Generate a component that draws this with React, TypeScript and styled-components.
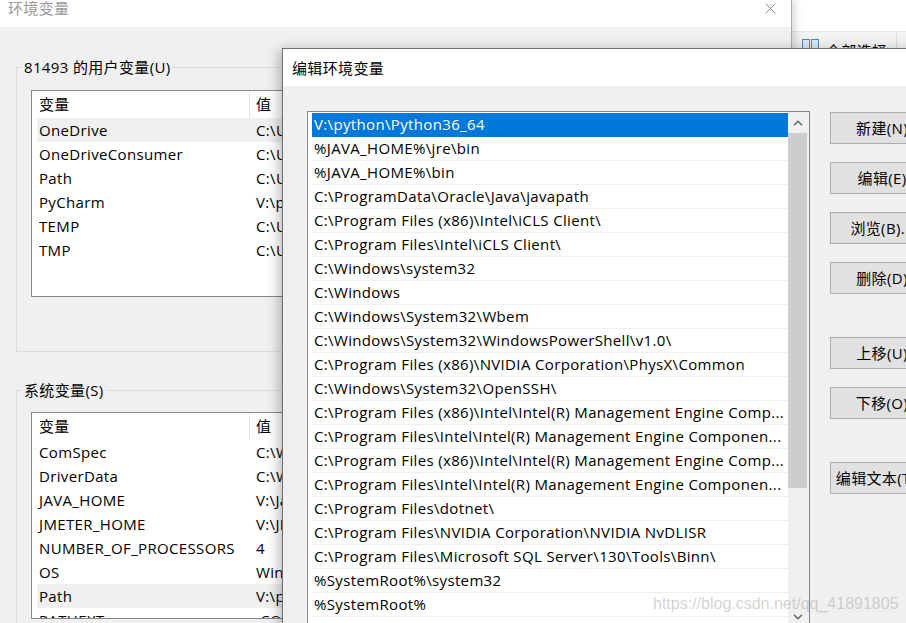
import React from "react";
import styled, { createGlobalStyle } from "styled-components";

const GlobalStyle = createGlobalStyle`
  html, body { margin: 0; padding: 0; background: #fff; }
  body {
    font-family: "Open Sans", "Noto Sans CJK SC", sans-serif;
    font-size: 15px;
    letter-spacing: 0.35px;
    color: #000;
  }
  * { box-sizing: border-box; }
`;

const Desktop = styled.div`
  position: relative;
  width: 906px;
  height: 623px;
  overflow: hidden;
  background: #fff;
`;

/* ---------- window on the right (behind) ---------- */
const RightWindow = styled.div`
  position: absolute;
  left: 792px;
  top: 0;
  width: 220px;
  height: 120px;
  display: flex;
  flex-direction: column;
  background: #fff;
`;

const RightTop = styled.div`
  height: 32px;
  border-bottom: 1px solid #e6e6e6;
  display: flex;
  justify-content: flex-end;
  padding: 11px 0 0 0;
`;

const RightToolbar = styled.div`
  flex: 1;
  background: #f3f3f3;
  display: flex;
  align-items: flex-start;
  padding: 7px 0 0 10px;
`;

const ToolLabel = styled.span`
  margin-left: 7px;
  margin-top: 2px;
  line-height: 20px;
  white-space: nowrap;
`;

const ToolDivider = styled.div`
  width: 1px;
  height: 30px;
  margin-left: 9px;
  margin-top: -6px;
  background: #dadada;
`;

/* ---------- environment variables window (behind) ---------- */
const BackWindow = styled.div`
  position: absolute;
  left: 0;
  top: 0;
  width: 792px;
  height: 700px;
  display: flex;
  flex-direction: column;
  background: #f0f0f0;
  border-right: 1px solid #a8a8a8;
  box-shadow: 3px 0 8px rgba(0, 0, 0, 0.16);
`;

const BackTitleBar = styled.div`
  height: 27px;
  background: #fff;
  display: flex;
  justify-content: space-between;
  align-items: flex-start;
  padding: 0 15px 0 8px;
`;

const InactiveTitle = styled.span`
  color: #9a9a9a;
  line-height: 16px;
`;

const CloseGlyph = styled.svg`
  margin-top: 3px;
`;

const BackBody = styled.div`
  flex: 1;
  display: flex;
  flex-direction: column;
  padding: 0 16px;
`;

const GroupBox = styled.div<{ $top: number; $padTop: number; $padBottom: number }>`
  position: relative;
  border: 1px solid #dcdcdc;
  margin-top: ${(p) => p.$top}px;
  padding: ${(p) => p.$padTop}px 14px ${(p) => p.$padBottom}px 14px;
`;

const GroupTitle = styled.span`
  position: absolute;
  top: -11px;
  left: 5px;
  padding: 0 2px;
  background: #f0f0f0;
  line-height: 20px;
  white-space: nowrap;
`;

const VarList = styled.div`
  height: 207px;
  border: 1px solid #828790;
  background: #fff;
  overflow: hidden;
  padding-left: 5px;
`;

const ListHeader = styled.div`
  display: grid;
  grid-template-columns: 213px 1fr;
  height: 27px;
`;

const HeaderCell = styled.div<{ $sep?: boolean }>`
  line-height: 27px;
  padding-left: ${(p) => (p.$sep ? 2 : 6)}px;
  border-right: ${(p) => (p.$sep ? "1px solid #e5e5e5" : "none")};
  margin-bottom: 1px;
`;

const VarRow = styled.div<{ $hover?: boolean }>`
  display: grid;
  grid-template-columns: 213px 1fr;
  height: 24px;
  line-height: 24px;
  background: ${(p) => (p.$hover ? "#f0f0f0" : "transparent")};
  white-space: nowrap;
`;

const VarCell = styled.span<{ $value?: boolean }>`
  padding-left: ${(p) => (p.$value ? 6 : 2)}px;
  overflow: hidden;
`;

/* ---------- edit dialog (front) ---------- */
const Dialog = styled.div`
  position: absolute;
  left: 282px;
  top: 48px;
  width: 720px;
  height: 640px;
  display: flex;
  flex-direction: column;
  background: #f0f0f0;
  border: 1px solid #6f6f6f;
  box-shadow: -3px 2px 12px rgba(0, 0, 0, 0.28);
`;

const DialogTitleBar = styled.div`
  height: 37px;
  background: #fff;
  display: flex;
  align-items: center;
  padding-left: 9px;
`;

const DialogBody = styled.div`
  display: flex;
  align-items: flex-start;
  gap: 20px;
  padding: 25px 0 0 24px;
`;

const PathList = styled.div`
  width: 503px;
  height: 517px;
  border: 1px solid #828790;
  background: #fff;
  display: flex;
`;

const PathItems = styled.div`
  flex: 1;
  min-width: 0;
  padding: 1px 0 0 4px;
  overflow: hidden;
`;

const PathRow = styled.div<{ $selected?: boolean }>`
  height: 24px;
  line-height: 23px;
  padding: 0 2px 0 2px;
  white-space: nowrap;
  overflow: hidden;
  border-bottom: 1px solid ${(p) => (p.$selected ? "#0078d7" : "#efefef")};
  background: ${(p) => (p.$selected ? "#0078d7" : "transparent")};
  color: ${(p) => (p.$selected ? "#fff" : "#000")};
`;

const ScrollBar = styled.div`
  width: 21px;
  background: #f0f0f0;
  display: flex;
  flex-direction: column;
`;

const ScrollArrow = styled.div`
  height: 21px;
  display: flex;
  align-items: center;
  justify-content: center;
  padding-right: 2px;
`;

const ScrollThumb = styled.div`
  height: 355px;
  margin-right: 2px;
  background: #cdcdcd;
`;

const ScrollTrack = styled.div`
  flex: 1;
`;

const ButtonColumn = styled.div`
  display: flex;
  flex-direction: column;
  gap: 18px;
  padding-top: 1px;
`;

const ActionButton = styled.button<{ $extra?: number }>`
  width: 100px;
  height: 32px;
  margin-top: ${(p) => p.$extra ?? 0}px;
  border: 1px solid #adadad;
  background: #e1e1e1;
  font: inherit;
  letter-spacing: inherit;
  color: #000;
  padding: 0 0 2px 4px;
  display: flex;
  align-items: center;
  justify-content: center;
  white-space: nowrap;
  overflow: hidden;
`;

const Watermark = styled.div`
  position: absolute;
  left: 653px;
  top: 594px;
  font-family: "Liberation Sans", Arial, sans-serif;
  font-size: 16px;
  letter-spacing: 0;
  line-height: 20px;
  color: rgba(150, 150, 150, 0.42);
  white-space: nowrap;
  pointer-events: none;
`;

/* ---------- data ---------- */
const userVars: [string, string, boolean?][] = [
  ["OneDrive", "C:\\Users\\81493\\OneDrive", true],
  ["OneDriveConsumer", "C:\\Users\\81493\\OneDrive"],
  ["Path", "C:\\Users\\81493\\AppData\\Local\\Microsoft\\WindowsApps;"],
  ["PyCharm", "V:\\pycharm\\bin;"],
  ["TEMP", "C:\\Users\\81493\\AppData\\Local\\Temp"],
  ["TMP", "C:\\Users\\81493\\AppData\\Local\\Temp"],
];

const sysVars: [string, string, boolean?][] = [
  ["ComSpec", "C:\\Windows\\system32\\cmd.exe"],
  ["DriverData", "C:\\Windows\\System32\\Drivers\\DriverData"],
  ["JAVA_HOME", "V:\\Java\\jdk1.8.0"],
  ["JMETER_HOME", "V:\\JMeter\\apache-jmeter"],
  ["NUMBER_OF_PROCESSORS", "4"],
  ["OS", "Windows_NT"],
  ["Path", "V:\\python\\Python36_64;%JAVA_HOME%\\jre\\bin;", true],
  ["PATHEXT", ".COM;.EXE;.BAT;.CMD;.VBS"],
];

const paths = [
  "V:\\python\\Python36_64",
  "%JAVA_HOME%\\jre\\bin",
  "%JAVA_HOME%\\bin",
  "C:\\ProgramData\\Oracle\\Java\\javapath",
  "C:\\Program Files (x86)\\Intel\\iCLS Client\\",
  "C:\\Program Files\\Intel\\iCLS Client\\",
  "C:\\Windows\\system32",
  "C:\\Windows",
  "C:\\Windows\\System32\\Wbem",
  "C:\\Windows\\System32\\WindowsPowerShell\\v1.0\\",
  "C:\\Program Files (x86)\\NVIDIA Corporation\\PhysX\\Common",
  "C:\\Windows\\System32\\OpenSSH\\",
  "C:\\Program Files (x86)\\Intel\\Intel(R) Management Engine Comp...",
  "C:\\Program Files\\Intel\\Intel(R) Management Engine Componen...",
  "C:\\Program Files (x86)\\Intel\\Intel(R) Management Engine Comp...",
  "C:\\Program Files\\Intel\\Intel(R) Management Engine Componen...",
  "C:\\Program Files\\dotnet\\",
  "C:\\Program Files\\NVIDIA Corporation\\NVIDIA NvDLISR",
  "C:\\Program Files\\Microsoft SQL Server\\130\\Tools\\Binn\\",
  "%SystemRoot%\\system32",
  "%SystemRoot%",
  "",
];

const buttons: [string, number][] = [
  ["新建(N)", 0],
  ["编辑(E)", 0],
  ["浏览(B)...", 0],
  ["删除(D)", 0],
  ["上移(U)", 25],
  ["下移(O)", 0],
  ["编辑文本(T)...", 25],
];

const Chevron = ({ up }: { up?: boolean }) => (
  <svg width="10" height="6" viewBox="0 0 10 6">
    <polyline
      points={up ? "1,5.2 5,1.2 9,5.2" : "1,0.8 5,4.8 9,0.8"}
      fill="none"
      stroke="#606060"
      strokeWidth="1.4"
    />
  </svg>
);

const VarTable = ({ rows }: { rows: [string, string, boolean?][] }) => (
  <VarList>
    <ListHeader>
      <HeaderCell $sep>变量</HeaderCell>
      <HeaderCell>值</HeaderCell>
    </ListHeader>
    {rows.map(([name, value, hover]) => (
      <VarRow key={name} $hover={hover}>
        <VarCell>{name}</VarCell>
        <VarCell $value>{value}</VarCell>
      </VarRow>
    ))}
  </VarList>
);

export default function App() {
  return (
    <>
      <GlobalStyle />
      <Desktop>
        <RightWindow>
          <RightTop>
            <svg width="10" height="8" viewBox="0 0 10 8" style={{ marginRight: 2 }}>
              <line x1="1" y1="7" x2="9" y2="1" stroke="#a0a0a0" strokeWidth="1" />
            </svg>
          </RightTop>
          <RightToolbar>
            <svg width="17" height="14" viewBox="0 0 17 14">
              <rect x="0.5" y="0.5" width="7" height="13" fill="#d6e8f8" stroke="#3a8ad6" />
              <rect x="9.5" y="0.5" width="7" height="13" fill="#d6e8f8" stroke="#3a8ad6" />
            </svg>
            <ToolLabel>全部选择</ToolLabel>
            <ToolDivider />
          </RightToolbar>
        </RightWindow>

        <BackWindow>
          <BackTitleBar>
            <InactiveTitle>环境变量</InactiveTitle>
            <CloseGlyph width="11" height="11" viewBox="0 0 11 11">
              <line x1="0.5" y1="0.5" x2="10.5" y2="10.5" stroke="#8a8a8a" strokeWidth="1" />
              <line x1="10.5" y1="0.5" x2="0.5" y2="10.5" stroke="#8a8a8a" strokeWidth="1" />
            </CloseGlyph>
          </BackTitleBar>
          <BackBody>
            <GroupBox $top={40} $padTop={22} $padBottom={54}>
              <GroupTitle>81493 的用户变量(U)</GroupTitle>
              <VarTable rows={userVars} />
            </GroupBox>
            <GroupBox $top={38} $padTop={21} $padBottom={40}>
              <GroupTitle>系统变量(S)</GroupTitle>
              <VarTable rows={sysVars} />
            </GroupBox>
          </BackBody>
        </BackWindow>

        <Dialog>
          <DialogTitleBar>编辑环境变量</DialogTitleBar>
          <DialogBody>
            <PathList>
              <PathItems>
                {paths.map((p, i) => (
                  <PathRow key={i} $selected={i === 0}>
                    {p}
                  </PathRow>
                ))}
              </PathItems>
              <ScrollBar>
                <ScrollArrow>
                  <Chevron up />
                </ScrollArrow>
                <ScrollThumb />
                <ScrollTrack />
                <ScrollArrow>
                  <Chevron />
                </ScrollArrow>
              </ScrollBar>
            </PathList>
            <ButtonColumn>
              {buttons.map(([label, extra]) => (
                <ActionButton key={label} $extra={extra}>
                  {label}
                </ActionButton>
              ))}
            </ButtonColumn>
          </DialogBody>
        </Dialog>

        <Watermark>https://blog.csdn.net/qq_41891805</Watermark>
      </Desktop>
    </>
  );
}
